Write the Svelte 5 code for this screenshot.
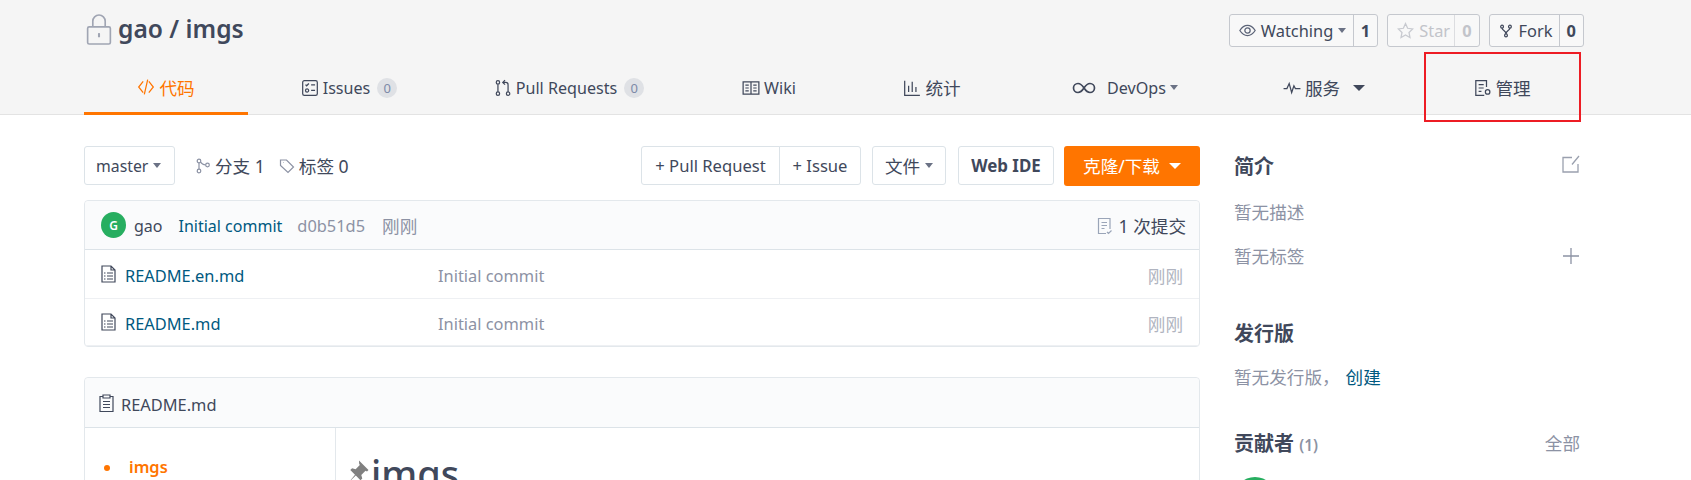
<script>
  const icons = {
    code: "M5.5 3 1.5 8l4 5M10.5 3l4 5-4 5M9.5 1.500l-3 13",
    issues: "M3 1.500h10A1.500 1.500 0 0 1 14.500 3v10a1.500 1.500 0 0 1-1.500 1.500H3A1.500 1.500 0 0 1 1.500 13V3A1.500 1.500 0 0 1 3 1.500zM4 5l1 1 2-2M9 5.200h3.500M9 10.200h3.500M6.800 10.200a1.400 1.400 0 1 1-2.800 0 1.400 1.400 0 0 1 2.800 0z",
    pr: "M5 3a1.500 1.500 0 1 1-3 0 1.500 1.500 0 0 1 3 0zM5 13a1.500 1.500 0 1 1-3 0 1.500 1.500 0 0 1 3 0zM14 13a1.500 1.500 0 1 1-3 0 1.500 1.500 0 0 1 3 0zM3.500 4.500v7M12.500 11.500V5A2 2 0 0 0 10.500 3H8M9.800 1 7.800 3l2 2",
    wiki: "M1 2.500h14v11H1zM8 2.500v11M3 5.500h3M3 8h3M3 10.500h3M10 5.500h3M10 8h3M10 10.500h3",
    stats: "M1.500 1.500V14.500H15M5 11.500V6M8.200 11.500V2.500M11.500 11.500V7",
    pulse: "M.5 8.500H3.500L5.500 4l2.200 8 2-6 1.300 2.500H15.500",
    manage: "M10 14.500H2.500V1.500H12V7M5 5h4.500M5 8h4.500M5 11h2.500M13 9.500a2 2 0 1 1 0 4 2 2 0 0 1 0-4z"
  };

  const tabs = [
    { label: "代码", icon: "code", active: true, zh: true },
    { label: "Issues", icon: "issues", count: 0 },
    { label: "Pull Requests", icon: "pr", count: 0 },
    { label: "Wiki", icon: "wiki" },
    { label: "统计", icon: "stats", zh: true },
    { label: "DevOps", infinity: true, caret: true },
    { label: "服务", icon: "pulse", caret: true, wide: true, zh: true },
    { label: "管理", icon: "manage", zh: true }
  ];

  const files = [
    { name: "README.en.md", message: "Initial commit", time: "刚刚" },
    { name: "README.md", message: "Initial commit", time: "刚刚" }
  ];
</script>

<div class="page">
  <header class="head">
    <div class="wrap">
      <div class="title-row">
        <div class="title">
          <svg class="lock" viewBox="0 0 24 30" width="26" height="31" fill="none" stroke="#a0a5b3" stroke-width="1.600">
            <rect x="1" y="12.500" width="22" height="16.500" rx="1.500" />
            <path d="M6 12.500V7a6 6 0 0 1 12 0v5.500" />
            <path d="M12 18.500v4" stroke-width="2" />
          </svg>
          <span>gao / imgs</span>
        </div>
        <div class="socials">
          <div class="social">
            <span class="social-main watch">
              <svg viewBox="0 0 16 16" width="17" height="17" fill="none" stroke="#5c6478" stroke-width="1.200">
                <path d="M.8 8C3 4.500 5.300 3.200 8 3.200S13 4.500 15.200 8C13 11.500 10.700 12.800 8 12.800S3 11.500.8 8z" />
                <circle cx="8" cy="8" r="2.500" />
              </svg>
              Watching <i class="caret"></i>
            </span>
            <b>1</b>
          </div>
          <div class="social disabled">
            <span class="social-main star">
              <svg viewBox="0 0 16 16" width="17" height="17" fill="none" stroke="#c8cad0" stroke-width="1.200">
                <path d="M8 1.500l2 4.400 4.800.6-3.500 3.300.9 4.800L8 12.200l-4.200 2.400.9-4.800L1.200 6.500 6 5.900z" />
              </svg>
              Star
            </span>
            <b>0</b>
          </div>
          <div class="social">
            <span class="social-main fork">
              <svg viewBox="0 0 16 16" width="14" height="14" fill="none" stroke="#40485b" stroke-width="1.400">
                <circle cx="3.500" cy="3" r="1.600" /><circle cx="12.500" cy="3" r="1.600" /><circle cx="8" cy="13" r="1.600" />
                <path d="M3.500 4.600c0 3 4.500 3 4.500 6.800M12.500 4.600c0 3-4.500 3-4.500 6.800" />
              </svg>
              Fork
            </span>
            <b>0</b>
          </div>
        </div>
      </div>
      <nav class="tabs">
        {#each tabs as tab}
          <div class="tab" class:active={tab.active}>
            {#if tab.infinity}
              <svg class="inf" viewBox="0 0 24 12" width="24" height="12" fill="none" stroke="currentColor" stroke-width="1.700">
                <path d="M12 6C10 3 8.500 1.500 6 1.500a4.500 4.500 0 0 0 0 9c2.500 0 4-1.500 6-4.500s3.500-4.500 6-4.500a4.500 4.500 0 0 1 0 9c-2.500 0-4-1.500-6-4.500z" />
              </svg>
            {:else}
              <svg viewBox="0 0 16 16" width="18" height="18" fill="none" stroke="currentColor" stroke-width="1.100">
                <path d={icons[tab.icon]} />
              </svg>
            {/if}
            <span class:zh={tab.zh}>{tab.label}</span>
            {#if tab.count !== undefined}<em class="count">{tab.count}</em>{/if}
            {#if tab.caret}<i class="caret" class:wide={tab.wide}></i>{/if}
          </div>
        {/each}
      </nav>
    </div>
  </header>

  <div class="mark"></div>

  <div class="wrap body">
    <main class="main">
      <div class="toolbar">
        <div class="btn branch">master <i class="caret"></i></div>
        <div class="meta">
          <svg viewBox="0 0 16 16" width="16" height="16" fill="none" stroke="#8c92a4" stroke-width="1.200">
            <circle cx="4" cy="3" r="1.800" /><circle cx="4" cy="13" r="1.800" /><circle cx="12.500" cy="7" r="1.800" />
            <path d="M4 4.800v6.400M5.500 4c1 1.800 3 2.800 5.200 3" />
          </svg>
          <span class="zh">分支 1</span>
        </div>
        <div class="meta">
          <svg viewBox="0 0 16 16" width="16" height="16" fill="none" stroke="#8c92a4" stroke-width="1.200">
            <path d="M1.500 2h6l7 7-5.500 5.500-7.500-7zM4.500 4.500h.5" />
          </svg>
          <span class="zh">标签 0</span>
        </div>
        <div class="actions">
          <div class="btn-group">
            <div class="btn pr">+ Pull Request</div>
            <div class="btn issue">+ Issue</div>
          </div>
          <div class="btn file"><span class="zh">文件</span> <i class="caret"></i></div>
          <div class="btn ide">Web IDE</div>
          <div class="clone"><span class="zh">克隆/下载</span> <i class="caret big"></i></div>
        </div>
      </div>

      <section class="box files">
        <div class="commit">
          <span class="avatar">G</span>
          <span class="author">gao</span>
          <span class="link">Initial commit</span>
          <span class="muted">d0b51d5</span>
          <span class="muted zh">刚刚</span>
          <span class="commits">
            <svg viewBox="0 0 16 18" width="16" height="18" fill="none" stroke="#9aa5b8" stroke-width="1.200">
              <path d="M9 16.500H1.500V1.500H13V12M4.500 5.500h5.500M4.500 8.500h5.500M4.500 11.500h3M10 15l1.500 1.500L14.500 13.500" />
            </svg>
            <span class="zh">1 次提交</span>
          </span>
        </div>
        {#each files as file}
          <div class="row">
            <svg class="doc" viewBox="0 0 15 18" width="15" height="18" fill="none" stroke="#40485b" stroke-width="1.200">
              <path d="M1 1h9l4 4v12H1zM10 1v4h4" />
              <path d="M6 8H12M6 11H12M6 14H12M3 8h1.500M3 11h1.500M3 14h1.500" />
            </svg>
            <span class="name">{file.name}</span>
            <span class="message">{file.message}</span>
            <span class="time zh">{file.time}</span>
          </div>
        {/each}
      </section>

      <section class="box readme">
        <div class="readme-head">
          <svg viewBox="0 0 15 18" width="15" height="18" fill="none" stroke="#40485b" stroke-width="1.200">
            <path d="M4 2.500H1v15h13v-15h-3M4 1h7v3H4zM4 7.500h7M4 10.500h7M4 13.500h7" />
          </svg>
          <span>README.md</span>
        </div>
        <div class="readme-body">
          <ul class="toc"><li>imgs</li></ul>
          <div class="doc-body">
            <svg class="pin" viewBox="0 0 26 26" width="26" height="26" fill="#808080">
              <path d="M12 1.500 21.500 11l-1.500 1.500-1.500-.7-4.200 4.200 1 3.500-1.800 1.800-4.700-4.700-6.800 6.400 6-7.300-4.700-4.700 1.800-1.800 3.500 1 4.200-4.200-.7-1.500z" />
            </svg>
            <h1>imgs</h1>
          </div>
        </div>
      </section>
    </main>

    <aside class="side">
      <div class="side-head first">
        <h3>简介</h3>
        <svg class="edit" viewBox="0 0 18 18" width="18" height="18" fill="none" stroke="#9aa0ae" stroke-width="1.300">
          <path d="M10 2.500H1v14.500h15V9M10 9.500 17 1" />
        </svg>
      </div>
      <p class="line">暂无描述</p>
      <div class="line tags">
        暂无标签
        <svg viewBox="0 0 18 18" width="18" height="18" fill="none" stroke="#8c92a4" stroke-width="1.300">
          <path d="M9 1v16M1 9h16" />
        </svg>
      </div>
      <div class="side-head release"><h3>发行版</h3></div>
      <p class="line after-release">暂无发行版，<a href="#create">创建</a></p>
      <div class="side-head contrib">
        <h3>贡献者 <small>(1)</small></h3>
        <span class="all">全部</span>
      </div>
      <div class="contrib-avatar"></div>
    </aside>
  </div>
</div>

<style>
  :global(body) {
    margin: 0;
    background: #fff;
  }

  .page {
    position: relative;
    height: 480px;
    overflow: hidden;
    color: #40485b;
    font-family: "Noto Sans", "Noto Sans CJK SC", sans-serif;
    font-size: 16.400px;
  }

  svg {
    flex: none;
  }

  .zh {
    font-size: 17.600px;
  }

  .head {
    background: #f5f5f5;
    border-bottom: 1px solid #e3e3e3;
    height: 115px;
    box-sizing: border-box;
  }

  .wrap {
    width: 1500px;
    margin-left: 84px;
  }

  .title-row {
    display: flex;
    justify-content: space-between;
    height: 47px;
    padding-top: 14px;
  }

  .title {
    display: flex;
    align-items: flex-start;
    gap: 6px;
    height: 33px;
    padding-left: 2px;
    font-size: 24.600px;
    line-height: 30px;
    font-weight: 600;
  }

  .socials {
    display: flex;
    gap: 9px;
  }

  .social {
    display: flex;
    align-items: center;
    height: 33px;
    box-sizing: border-box;
    border: 1px solid #c5c8ce;
    border-radius: 3px;
    background: #f8f8f8;
  }

  .social-main {
    display: flex;
    align-items: center;
    gap: 5px;
    height: 100%;
    box-sizing: border-box;
    padding-left: 9px;
    border-right: 1px solid #c5c8ce;
  }

  .watch {
    width: 124px;
  }

  .star {
    width: 67px;
  }

  .fork {
    width: 70px;
    gap: 6px;
  }

  .social b {
    flex: 1;
    padding: 0 7px;
    font-weight: 700;
    text-align: center;
  }

  .social.disabled {
    color: #c2c4ca;
  }

  .social.disabled .social-main {
    border-right-color: #dcdde0;
  }

  .caret {
    display: inline-block;
    width: 0;
    height: 0;
    border-left: 4.500px solid transparent;
    border-right: 4.500px solid transparent;
    border-top: 5px solid #6b7285;
  }

  .caret.wide {
    margin-left: 9px;
    border-left-width: 6px;
    border-right-width: 6px;
    border-top: 6px solid #40485b;
  }

  .tabs {
    display: flex;
    height: 54px;
  }

  .tab {
    flex: none;
    display: flex;
    align-items: center;
    justify-content: center;
    gap: 4px;
    box-sizing: border-box;
    padding-bottom: 1px;
    white-space: nowrap;
    font-size: 16.100px;
    color: #40485b;
  }

  .tab:nth-child(1) { width: 164px; }
  .tab:nth-child(2) { width: 202px; }
  .tab:nth-child(3) { width: 238px; }
  .tab:nth-child(4) { width: 162px; }
  .tab:nth-child(5) { width: 164px; }
  .tab:nth-child(6) { width: 222px; }
  .tab:nth-child(7) { width: 176px; }
  .tab:nth-child(8) { width: 180px; }

  .tab.active {
    color: #ff7500;
    border-bottom: 3px solid #ff7500;
    padding-top: 2px;
  }

  .inf {
    margin-right: 7px;
  }

  .count {
    display: inline-flex;
    align-items: center;
    justify-content: center;
    width: 20px;
    height: 20px;
    margin-left: 3px;
    border-radius: 50%;
    background: #dfe1e5;
    color: #7d8aa8;
    font-size: 13px;
    font-style: normal;
  }

  .mark {
    position: absolute;
    left: 1424px;
    top: 52px;
    width: 153px;
    height: 66px;
    border: 2px solid #ed1c24;
  }

  .body {
    display: flex;
    gap: 34px;
    padding-top: 31px;
  }

  .main {
    flex: none;
    width: 1116px;
  }

  .toolbar {
    display: flex;
    align-items: center;
    height: 39px;
    margin-bottom: 15px;
  }

  .btn {
    display: flex;
    align-items: center;
    gap: 5px;
    height: 39px;
    box-sizing: border-box;
    padding: 0 11px;
    background: #fff;
    border: 1px solid #dce3e8;
    border-radius: 3px;
  }

  .branch {
    width: 91px;
    margin-right: 20px;
    font-size: 15.800px;
  }

  .meta {
    display: flex;
    align-items: center;
    gap: 4px;
    margin-right: 14px;
  }

  .actions {
    display: flex;
    align-items: center;
    margin-left: auto;
  }

  .btn-group {
    display: flex;
    margin-right: 11px;
  }

  .pr {
    width: 139px;
    justify-content: center;
    font-size: 16.600px;
    border-radius: 3px 0 0 3px;
  }

  .issue {
    width: 82px;
    justify-content: center;
    margin-left: -1px;
    font-size: 16.600px;
    border-radius: 0 3px 3px 0;
  }

  .file {
    width: 74px;
    justify-content: center;
    margin-right: 12px;
  }

  .ide {
    width: 96px;
    justify-content: center;
    margin-right: 10px;
    font-size: 16.900px;
    font-weight: 700;
  }

  .clone {
    display: flex;
    align-items: center;
    justify-content: center;
    gap: 9px;
    width: 136px;
    height: 40px;
    background: #ff7500;
    color: #fff;
    border-radius: 3px;
  }

  .caret.big {
    border-left-width: 6px;
    border-right-width: 6px;
    border-top: 6px solid #fff;
  }

  .box {
    border: 1px solid #e3e8ec;
    border-radius: 4px;
    background: #fff;
  }

  .commit {
    display: flex;
    align-items: center;
    gap: 15px;
    height: 48px;
    padding: 0 13px 0 16px;
    background: #fafbfc;
    border-bottom: 1px solid #dce3e8;
    border-radius: 4px 4px 0 0;
    font-size: 16px;
  }

  .commit > span {
    padding-top: 1px;
  }

  .avatar {
    display: flex;
    align-items: center;
    justify-content: center;
    width: 25px;
    height: 25px;
    margin-right: -7px;
    border-radius: 50%;
    background: #27ae60;
    color: #fff;
    font-size: 12px;
    font-weight: 600;
  }

  .author {
    margin-right: 1px;
  }

  .link {
    color: #005980;
  }

  .muted {
    color: #8c92a4;
    font-size: 16.400px;
  }

  .muted.zh {
    margin-left: 2px;
    font-size: 17.600px;
  }

  .commits {
    display: flex;
    align-items: center;
    gap: 6px;
    margin-left: auto;
  }

  .row {
    display: flex;
    align-items: center;
    height: 48px;
    padding: 0 16px;
    border-bottom: 1px solid #eef0f3;
  }

  .row:last-child {
    height: 46px;
  }

  .row span {
    margin-top: 3px;
  }

  .row:last-child span {
    margin-top: 2px;
  }

  .doc {
    margin-right: 9px;
  }

  .name {
    width: 313px;
    color: #005980;
  }

  .message {
    flex: 1;
    color: #8c92a4;
  }

  .time {
    color: #b0b4c0;
  }

  .readme {
    margin-top: 30px;
  }

  .readme-head {
    display: flex;
    align-items: center;
    gap: 7px;
    height: 49px;
    padding-left: 14px;
    background: #fafbfc;
    border-bottom: 1px solid #dce3e8;
    border-radius: 4px 4px 0 0;
  }

  .readme-head span {
    margin-top: 4px;
  }

  .readme-body {
    display: flex;
    height: 200px;
  }

  .toc {
    flex: none;
    width: 251px;
    box-sizing: border-box;
    margin: 0;
    padding: 27px 0 0 44px;
    list-style: none;
    border-right: 1px solid #e3e8ec;
    color: #ff7500;
    font-weight: 600;
  }

  .toc li {
    position: relative;
  }

  .toc li::before {
    content: "";
    position: absolute;
    left: -25px;
    top: 10px;
    width: 6px;
    height: 6px;
    border-radius: 50%;
    background: #ff7500;
  }

  .doc-body {
    display: flex;
    align-items: flex-start;
    padding: 20px 0 0 11px;
  }

  .pin {
    margin-top: 11px;
  }

  h1 {
    margin: 0 0 0 -2px;
    font-size: 38px;
    font-weight: 500;
    line-height: 50px;
  }

  .side {
    flex: 1;
    padding: 7px 4px 0 0;
  }

  .side-head {
    display: flex;
    justify-content: space-between;
    align-items: center;
  }

  .edit {
    margin-top: -6px;
  }

  h3 {
    margin: 0;
    font-size: 20px;
    font-weight: 700;
    line-height: 28px;
  }

  small {
    font-size: 15.400px;
    font-weight: 600;
    color: #8c92a4;
  }

  .line {
    display: flex;
    justify-content: space-between;
    align-items: center;
    margin: 0;
    color: #8c92a4;
    font-size: 17.600px;
    line-height: 26px;
  }

  p.line {
    justify-content: flex-start;
    margin-top: 18px;
  }

  p.after-release {
    margin-top: 16px;
  }

  .tags {
    margin-top: 18px;
  }

  .side-head.release {
    margin-top: 51px;
  }

  a {
    margin-left: 6px;
    color: #005980;
    text-decoration: none;
  }

  .side-head.contrib {
    margin-top: 40px;
  }

  .all {
    margin-top: -6px;
    color: #8c92a4;
    font-size: 17.600px;
  }

  .contrib-avatar {
    width: 42px;
    height: 42px;
    margin-top: 17px;
    border-radius: 50%;
    background: #27ae60;
  }
</style>
